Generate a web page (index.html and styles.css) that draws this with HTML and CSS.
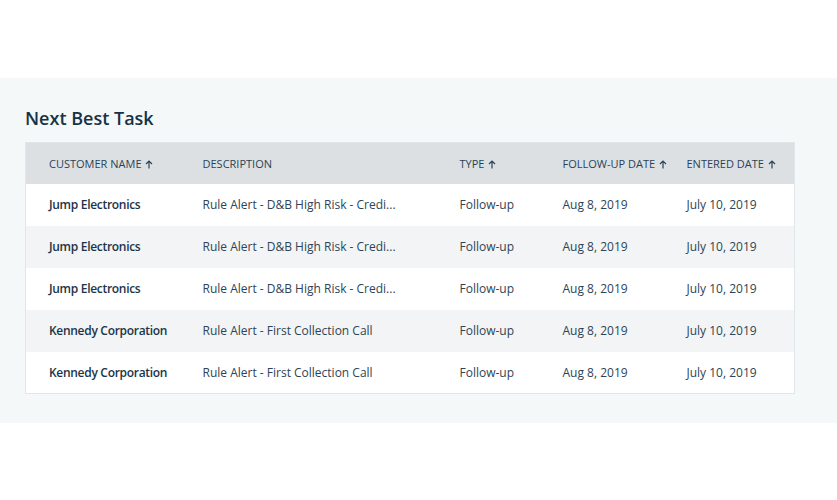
FILE: index.html
```html
<!DOCTYPE html>
<html>
<head>
<meta charset="utf-8">
<link rel="stylesheet" href="styles.css">
</head>
<body>
<div class="top"></div>
<section class="panel">
  <h2 class="title">Next Best Task</h2>
  <table class="tasks">
    <colgroup>
      <col class="c1"><col class="c2"><col class="c3"><col class="c4"><col class="c5">
    </colgroup>
    <thead>
      <tr>
        <th>Customer Name <svg class="arr" viewBox="0 0 8 9" width="8" height="9"><path d="M4 8.5V1M1 4L4 1l3 3" fill="none" stroke="currentColor" stroke-width="1.2"/></svg></th>
        <th>Description</th>
        <th>Type <svg class="arr" viewBox="0 0 8 9" width="8" height="9"><path d="M4 8.5V1M1 4L4 1l3 3" fill="none" stroke="currentColor" stroke-width="1.2"/></svg></th>
        <th>Follow-up Date <svg class="arr" viewBox="0 0 8 9" width="8" height="9"><path d="M4 8.5V1M1 4L4 1l3 3" fill="none" stroke="currentColor" stroke-width="1.2"/></svg></th>
        <th>Entered Date <svg class="arr" viewBox="0 0 8 9" width="8" height="9"><path d="M4 8.5V1M1 4L4 1l3 3" fill="none" stroke="currentColor" stroke-width="1.2"/></svg></th>
      </tr>
    </thead>
    <tbody>
      <tr><td class="name">Jump Electronics</td><td>Rule Alert - D&amp;B High Risk - Credi...</td><td>Follow-up</td><td>Aug 8, 2019</td><td>July 10, 2019</td></tr>
      <tr><td class="name">Jump Electronics</td><td>Rule Alert - D&amp;B High Risk - Credi...</td><td>Follow-up</td><td>Aug 8, 2019</td><td>July 10, 2019</td></tr>
      <tr><td class="name">Jump Electronics</td><td>Rule Alert - D&amp;B High Risk - Credi...</td><td>Follow-up</td><td>Aug 8, 2019</td><td>July 10, 2019</td></tr>
      <tr><td class="name">Kennedy Corporation</td><td>Rule Alert - First Collection Call</td><td>Follow-up</td><td>Aug 8, 2019</td><td>July 10, 2019</td></tr>
      <tr><td class="name">Kennedy Corporation</td><td>Rule Alert - First Collection Call</td><td>Follow-up</td><td>Aug 8, 2019</td><td>July 10, 2019</td></tr>
    </tbody>
  </table>
</section>
</body>
</html>
```
FILE: styles.css
```css
* { box-sizing: border-box; }
html, body { margin: 0; padding: 0; background: #ffffff; }
body { font-family: "Open Sans", "Noto Sans", sans-serif; color: #1e3548; }
.top { height: 78px; }
.panel {
  background: #f5f8f9;
  height: 345px;
  padding: 27px 0 0 25px;
}
.title {
  margin: 0 0 11px 0;
  font-size: 18px;
  line-height: 26px;
  font-weight: 600;
  color: #163247;
}
.tasks {
  width: 769px;
  border-collapse: collapse;
  table-layout: fixed;
  border: 1px solid #e3e6e9;
  background: #fff;
}
.c1 { width: 177px; }
.c2 { width: 257px; }
.c3 { width: 103px; }
.c4 { width: 124px; }
.c5 { width: 108px; }
.tasks th {
  background: #dce0e3;
  height: 41px;
  padding: 0;
  text-align: left;
  font-size: 11px;
  font-weight: 400;
  text-transform: uppercase;
  color: #2b4357;
  white-space: nowrap;
}
.tasks th:first-child, .tasks td:first-child { padding-left: 23px; }
.arr { vertical-align: -1px; margin-left: 1px; }
.tasks td {
  height: 42px;
  padding: 0;
  font-size: 12px;
  color: #2e4456;
  white-space: nowrap;
}
.tasks tbody tr:nth-child(even) td { background: #f2f4f5; }
.tasks td.name { font-weight: 600; color: #1c3447; letter-spacing: -0.3px; }
```
